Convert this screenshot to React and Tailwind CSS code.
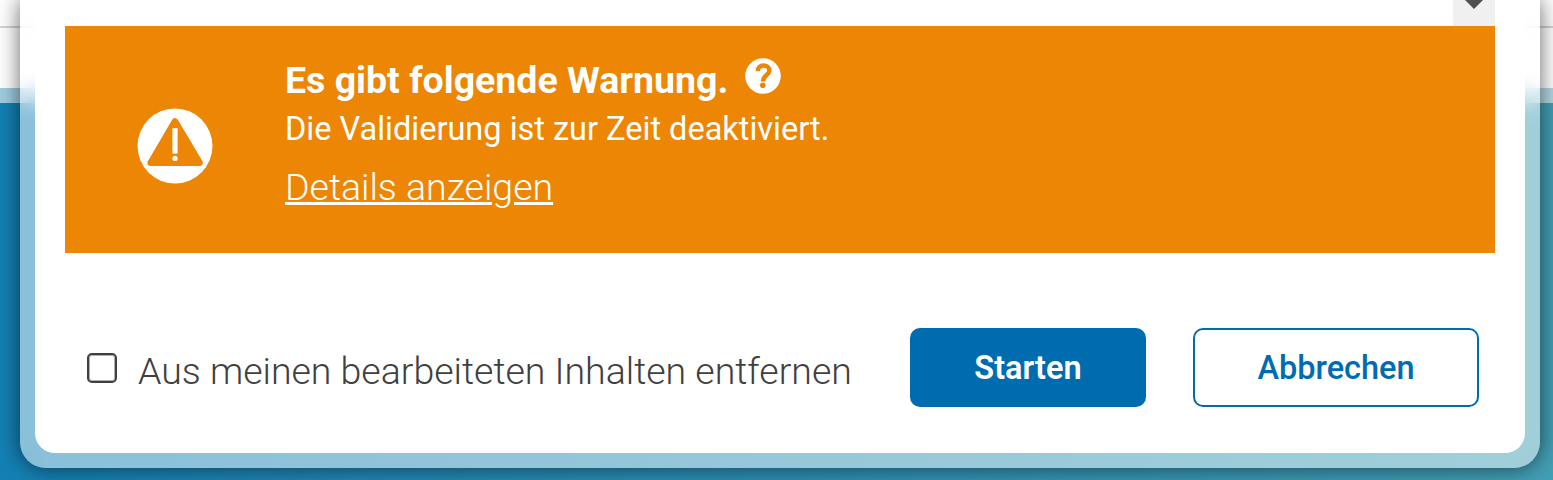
function WarningIcon() {
  return (
    <svg viewBox="0 0 76 76" className="h-[76px] w-[76px] shrink-0">
      <circle cx="38" cy="38" r="37.5" fill="#fff" />
      <path d="M38 13.5 L62.5 54.8 H13.7 Z" fill="#ed8604" stroke="#ed8604" strokeWidth="6.6" strokeLinejoin="round" />
      <rect x="35.4" y="20.2" width="5.2" height="25.4" fill="#fff" />
      <circle cx="38" cy="50.4" r="2.6" fill="#fff" />
    </svg>
  );
}

function HelpIcon() {
  return (
    <svg viewBox="0 0 36 36" className="h-[36px] w-[36px] shrink-0">
      <circle cx="18" cy="18" r="17.8" fill="#fff" />
      <path
        d="M12.7 13.2C12.7 9.6 15 7.5 18.5 7.5C22.1 7.5 24.4 9.5 24.4 12.5C24.4 17 17.9 17.3 17.9 23.6"
        fill="none"
        stroke="#ed8604"
        strokeWidth="4.4"
      />
      <circle cx="17.8" cy="27.3" r="2.8" fill="#ed8604" />
    </svg>
  );
}

export default function App() {
  return (
    <div className="grid h-[480px] w-[1553px] overflow-hidden font-['Roboto',sans-serif]">
      <div className="col-start-1 row-start-1 flex h-[480px] flex-col bg-linear-to-r from-[#1380b4] to-[#429fb4]">
        <div className="h-[28px] shrink-0 border-b-2 border-[#d4d4d4] bg-white" />
        <div className="h-[60px] shrink-0 bg-white" />
        <div className="h-[15px] shrink-0 bg-white/60" />
      </div>

      <div className="z-10 col-start-1 row-start-1 ml-[20px] h-[468px] w-[1520px] rounded-b-[26px] shadow-[0_0_22px_0_rgba(0,0,0,0.6)]">
        <div className="h-full rounded-b-[26px] bg-white/50 px-[15px] pb-[15px] backdrop-blur-[10px]">
          <div className="flex h-full flex-col rounded-b-[20px] bg-white px-[30px]">
            <div className="flex h-[26px] shrink-0 justify-end">
              <div className="flex w-[42px] justify-center bg-[#f0f0f0]">
                <svg viewBox="0 0 18 9" className="h-[9px] w-[18px]">
                  <path d="M0 0 H18 L9 9 Z" fill="#505050" />
                </svg>
              </div>
            </div>

            <div className="flex h-[227px] shrink-0 bg-[#ed8604] pl-[72px] text-white">
              <div className="flex w-[148px] pt-[82px]">
                <WarningIcon />
              </div>
              <div className="flex flex-col items-start whitespace-nowrap">
                <div className="flex pt-[32px]">
                  <h2 className="h-[44px] w-[460px] text-[37.5px] leading-[44px] font-bold">Es gibt folgende Warnung.</h2>
                  <HelpIcon />
                </div>
                <p className="mt-[7px] text-[32.5px] leading-[40px]">Die Validierung ist zur Zeit deaktiviert.</p>
                <a href="#" className="mt-[16px] text-[37.5px] leading-[44px] font-light tracking-[-0.02px] underline">Details anzeigen</a>
              </div>
            </div>

            <div className="flex pt-[75px] pl-[22px]">
              <label className="flex w-[823px] whitespace-nowrap text-[#404040]">
                <span className="mt-[25px] h-[30px] w-[30px] shrink-0 rounded-[5px] border-2 border-[#404040] inset-ring inset-ring-[#b0b0b0]" />
                <span className="mt-[21px] ml-[21px] text-[37.5px] leading-[44px] font-light tracking-[-0.02px]">
                  Aus meinen bearbeiteten Inhalten entfernen
                </span>
              </label>
              <button className="h-[79px] w-[236px] shrink-0 rounded-[10px] bg-[#006cb0] text-[32.5px] leading-[40px] font-semibold text-white">
                Starten
              </button>
              <button className="ml-[47px] h-[79px] w-[286px] shrink-0 rounded-[10px] border-2 border-[#006cb0] bg-white text-[32.5px] leading-[40px] font-medium text-[#006cb0]">
                Abbrechen
              </button>
            </div>
          </div>
        </div>
      </div>
    </div>
  );
}
